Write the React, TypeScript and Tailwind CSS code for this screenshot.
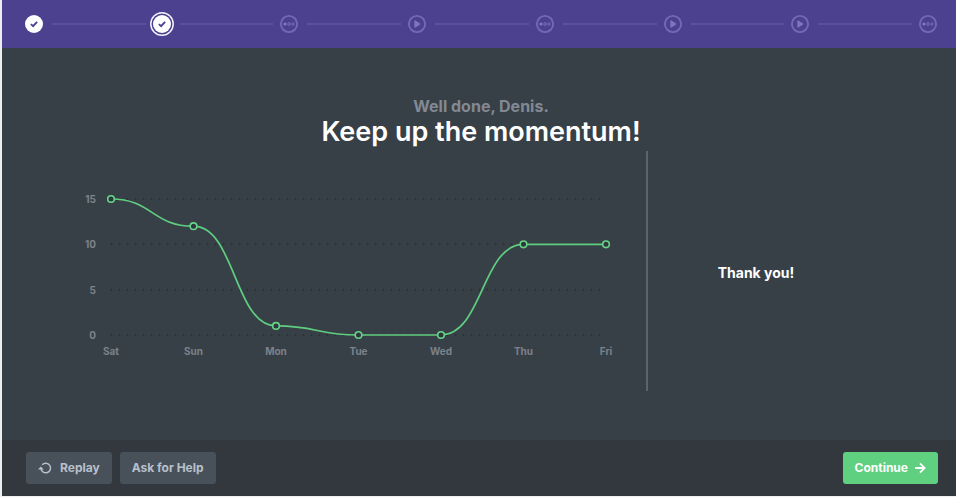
import React from 'react';

type StepKind = 'done' | 'current' | 'quiz' | 'video';

interface Point {
  day: string;
  value: number;
}

const steps: StepKind[] = ['done', 'current', 'quiz', 'video', 'quiz', 'video', 'video', 'quiz'];

const data: Point[] = [
  { day: 'Sat', value: 15 },
  { day: 'Sun', value: 12 },
  { day: 'Mon', value: 1 },
  { day: 'Tue', value: 0 },
  { day: 'Wed', value: 0 },
  { day: 'Thu', value: 10 },
  { day: 'Fri', value: 10 }
];

const ticks = [15, 10, 5, 0];

const getX = (index: number) => 29 + index * 82.5;
const getY = (value: number) => 184 - (value * 136) / 15;

// Smooth line, flat at every point
const getLine = () =>
  data
    .map((point, i) => {
      const x = getX(i);
      const y = getY(point.value);
      if (i === 0) return `M${x} ${y}`;
      const mid = (getX(i - 1) + x) / 2;
      return `C${mid} ${getY(data[i - 1].value)} ${mid} ${y} ${x} ${y}`;
    })
    .join(' ');

const StepIcon: React.FC<{ kind: StepKind }> = ({ kind }) => {
  const done = kind === 'done' || kind === 'current';

  return (
    <svg viewBox="0 0 24 24" className="size-6 shrink-0" aria-hidden="true">
      {kind === 'current' && (
        <circle cx="12" cy="12" r="11.2" fill="none" stroke="#f3f1fb" strokeWidth="1.5" />
      )}
      {done && (
        <>
          <circle cx="12" cy="12" r="9" fill="#fff" />
          <path d="M8.9 12.1l2.2 2.1 4-4.4" fill="none" stroke="#4b418f" strokeWidth="1.9" />
        </>
      )}
      {!done && <circle cx="12" cy="12" r="8.1" fill="none" stroke="#7568b3" strokeWidth="1.9" />}
      {kind === 'video' && (
        <path d="M9.9 8.7v6.6l5.2-3.3z" fill="#8175bb" stroke="#8175bb" strokeWidth="1" strokeLinejoin="round" />
      )}
      {kind === 'quiz' && (
        <>
          <circle cx="8" cy="12" r="1.6" fill="#8579be" />
          <circle cx="12" cy="12" r="1.4" fill="#5f53a2" stroke="#7266b0" strokeWidth="1" />
          <circle cx="16" cy="12" r="1.2" fill="#5f53a2" stroke="#7266b0" strokeWidth="1" />
        </>
      )}
    </svg>
  );
};

const Chart: React.FC = () => (
  <svg viewBox="0 0 564 240" className="w-full" role="img" aria-label="Activity this week">
    {ticks.map((tick) => (
      <g key={tick}>
        <line
          x1="29.5"
          x2="524"
          y1={getY(tick)}
          y2={getY(tick)}
          stroke="#232a30"
          strokeWidth="1.7"
          strokeLinecap="round"
          strokeDasharray="0 8"
        />
        <text x="14" y={getY(tick) + 4} textAnchor="end" className="fill-[#7b828b] text-[10px] font-bold">
          {tick}
        </text>
      </g>
    ))}
    <path d={getLine()} fill="none" stroke="#5fce80" strokeWidth="1.7" />
    {data.map((point, i) => (
      <g key={point.day}>
        <circle cx={getX(i)} cy={getY(point.value)} r="3.3" fill="#30363d" stroke="#66d588" strokeWidth="1.6" />
        <text x={getX(i)} y="204" textAnchor="middle" className="fill-[#7b828b] text-[10px] font-bold">
          {point.day}
        </text>
      </g>
    ))}
  </svg>
);

const App: React.FC = () => {
  return (
    <div className="h-screen bg-[#eceef0] pb-px pl-0.5 font-[Inter,sans-serif]">
      <div className="flex h-full flex-col bg-[#384047]">
        {/* Progress */}
        <header className="flex h-12 shrink-0 items-center bg-[#4b418f] pl-5 pr-4">
          {steps.map((kind, i) => (
            <React.Fragment key={i}>
              {i > 0 && <div className="ml-1.5 mr-1 h-0.5 flex-1 bg-[#5a509d]" />}
              <StepIcon kind={kind} />
            </React.Fragment>
          ))}
        </header>

        {/* Summary */}
        <main className="flex-1 px-20 pt-12">
          <div className="pl-1 text-center">
            <p className="text-base font-bold leading-5 text-[#838993]">Well done, Denis.</p>
            <h1 className="text-[27px] font-semibold leading-8 text-white">Keep up the momentum!</h1>
          </div>
          <div className="mt-[3px] flex">
            <div className="min-w-0 flex-1">
              <Chart />
            </div>
            <div className="flex w-[230px] items-center justify-center border-l-2 border-[#5c626e] pr-3 pt-1">
              <p className="text-sm font-bold text-white">Thank you!</p>
            </div>
          </div>
        </main>

        {/* Actions */}
        <footer className="flex h-14 shrink-0 items-center gap-2 bg-[#32383e] pl-6 pr-[18px] text-xs font-bold">
          <button className="flex h-8 items-center gap-2 rounded-[3px] bg-[#485059] px-3 text-[#b7c0cb]">
            <svg viewBox="0 0 14 14" className="size-3.5" fill="none" aria-hidden="true">
              <path d="M4.2 3.8A4.8 4.8 0 1 1 3 7.6" stroke="currentColor" strokeWidth="1.5" />
              <path d="M0 8.6L2.8 5.4l3 3.2z" fill="currentColor" />
            </svg>
            Replay
          </button>
          <button className="h-8 rounded-[3px] bg-[#485059] px-3 text-[#b7c0cb]">Ask for Help</button>
          <button className="ml-auto flex h-8 items-center gap-1.5 rounded-[3px] bg-[#5fcf80] px-3 text-white">
            Continue
            <svg viewBox="0 0 12 12" className="size-3" fill="none" stroke="currentColor" strokeWidth="1.8" aria-hidden="true">
              <path d="M1 6h9.5M6 1.4L10.6 6 6 10.6" />
            </svg>
          </button>
        </footer>
      </div>
    </div>
  );
};

export default App;
